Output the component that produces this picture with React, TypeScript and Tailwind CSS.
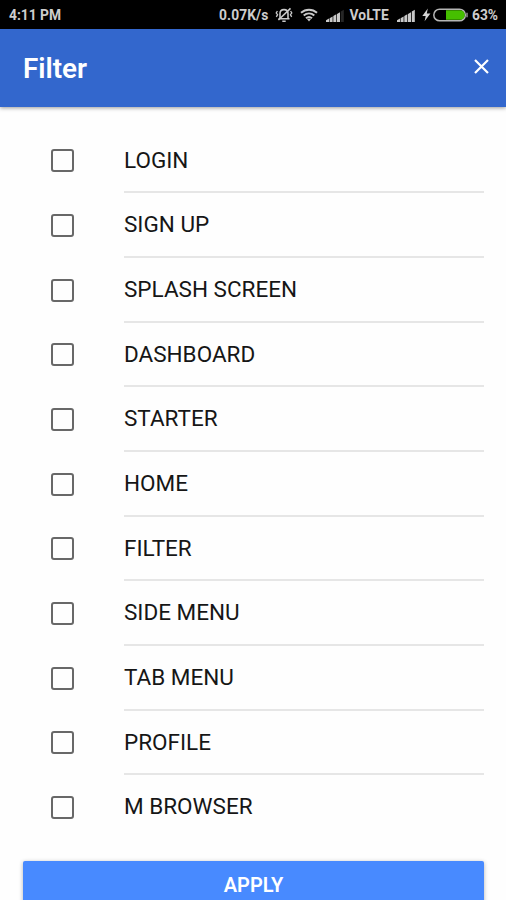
import React, { useState } from "react";

const filters = [
  "LOGIN",
  "SIGN UP",
  "SPLASH SCREEN",
  "DASHBOARD",
  "STARTER",
  "HOME",
  "FILTER",
  "SIDE MENU",
  "TAB MENU",
  "PROFILE",
  "M BROWSER",
];

const VibrateOff: React.FC = () => (
  <svg className="ml-[7px] h-[18px] w-[18px]" viewBox="0 0 18 18" fill="none" stroke="#c9c9c9" strokeWidth="1.6">
    <path d="M5 12.5V7.5C5 5 6.6 3.6 9 3.6S13 5 13 7.5V12.5" />
    <path d="M3.5 12.8H14.5M7.3 15.2H10.7" />
    <path d="M15.5 2.4L3.4 14" />
    <path d="M2.4 5L1.2 7L2.6 8.7L1.3 10.8M15.6 5L16.8 7L15.4 8.7L16.7 10.8" strokeWidth="1.3" />
  </svg>
);

const Wifi: React.FC = () => (
  <svg className="ml-[7px] h-[14px] w-[18px]" viewBox="0 0 18 14" fill="none" stroke="#c9c9c9" strokeWidth="2">
    <path d="M1 4.8C5.6 0.6 12.4 0.6 17 4.8" />
    <path d="M3.7 7.6C6.8 4.9 11.2 4.9 14.3 7.6" />
    <path d="M6 10.3C7.8 8.7 10.2 8.7 12 10.3" />
    <path d="M7 11.1L9 13.5L11 11.1C9.8 10.4 8.2 10.4 7 11.1Z" fill="#c9c9c9" stroke="none" />
  </svg>
);

const Signal: React.FC<{ full?: boolean }> = ({ full }) => (
  <svg className="h-[13px] w-[18px]" viewBox="0 0 18 13" fill="#c9c9c9">
    <path d="M0 11.2L3 9.6V13H0Z" />
    <path d="M3.6 9.2L6.6 7.4V13H3.6Z" />
    <path d="M7.3 7.1L10.3 5.3V13H7.3Z" />
    <path d="M11 4.9L14 3.2V13H11Z" />
    <path d="M14.8 2.6L17.8 0.8V13H14.8Z" fill={full ? "#c9c9c9" : "#262626"} />
  </svg>
);

const Battery: React.FC = () => (
  <svg className="ml-[7px] h-[14px] w-[46px]" viewBox="0 0 46 14">
    <path d="M5.8 0.5L0.3 8H3.7L2.6 13.2L8.4 5.6H4.8Z" fill="#d5d5d5" />
    <rect x="11.8" y="1.2" width="31.5" height="11.6" rx="5.8" fill="#000" stroke="#b5b5b5" strokeWidth="1.5" />
    <path d="M24 2.2H38A4.8 4.8 0 0 1 38 11.8H24Z" fill="#46bf00" />
    <path d="M45 4.8V9.2" stroke="#b5b5b5" strokeWidth="1.2" />
  </svg>
);

const StatusBar: React.FC = () => (
  <div className="flex h-[28.5px] shrink-0 items-center bg-black pt-[2px] pr-[8px] pl-[9px] text-[13.8px] font-bold whitespace-nowrap text-[#cdcdcd]">
    <span className="mr-auto">4:11 PM</span>
    <span className="tracking-[0.1px]">0.07K/s</span>
    <VibrateOff />
    <Wifi />
    <span className="ml-[8px] flex"><Signal /></span>
    <span className="ml-[5px] tracking-[0.15px]">VoLTE</span>
    <span className="ml-[8px] flex"><Signal full /></span>
    <Battery />
    <span className="ml-[4px]">63%</span>
  </div>
);

export default function App() {
  const [selected, setSelected] = useState<string[]>([]);

  const toggle = (name: string) =>
    setSelected((prev) => (prev.includes(name) ? prev.filter((n) => n !== name) : [...prev, name]));

  return (
    <div className="flex h-[900px] w-[506px] flex-col overflow-hidden bg-[#fefefe] font-['Roboto',sans-serif]">
      <StatusBar />
      <header className="flex h-[78.5px] shrink-0 items-center justify-between bg-[#3367cd] pr-[17px] pl-[23px] shadow-[0_1px_4px_rgba(0,0,0,0.4)]">
        <h1 className="pt-[2px] text-[27.8px] font-semibold text-white">Filter</h1>
        <button aria-label="Close" className="-mt-[3px]">
          <svg className="h-[15px] w-[15px]" viewBox="0 0 15 15" stroke="#fff" strokeWidth="2.2">
            <path d="M1 1L14 14M14 1L1 14" />
          </svg>
        </button>
      </header>

      <ul className="mt-[21.6px] shrink-0 pr-[22px] pl-[51px]">
        {filters.map((name) => (
          <li key={name} className="group flex h-[64.7px] items-stretch" onClick={() => toggle(name)}>
            <span
              role="checkbox"
              aria-checked={selected.includes(name)}
              className="mt-[20.7px] mr-[50px] h-[23px] w-[23px] shrink-0 rounded-[3px] border-2 border-[#686868] aria-checked:bg-[#488aff]"
            />
            <span className="flex grow items-center border-b-2 border-[#e6e6e6] pt-[1px] text-[22.5px] text-[#161616] group-last:border-transparent">
              {name}
            </span>
          </li>
        ))}
      </ul>

      <button className="mr-[22px] ml-[23px] mt-[20.7px] h-[48px] shrink-0 rounded-[2px] bg-[#488aff] text-[20px] font-semibold text-white shadow-[0_1px_4px_rgba(0,0,0,0.3)]">
        APPLY
      </button>
    </div>
  );
}
